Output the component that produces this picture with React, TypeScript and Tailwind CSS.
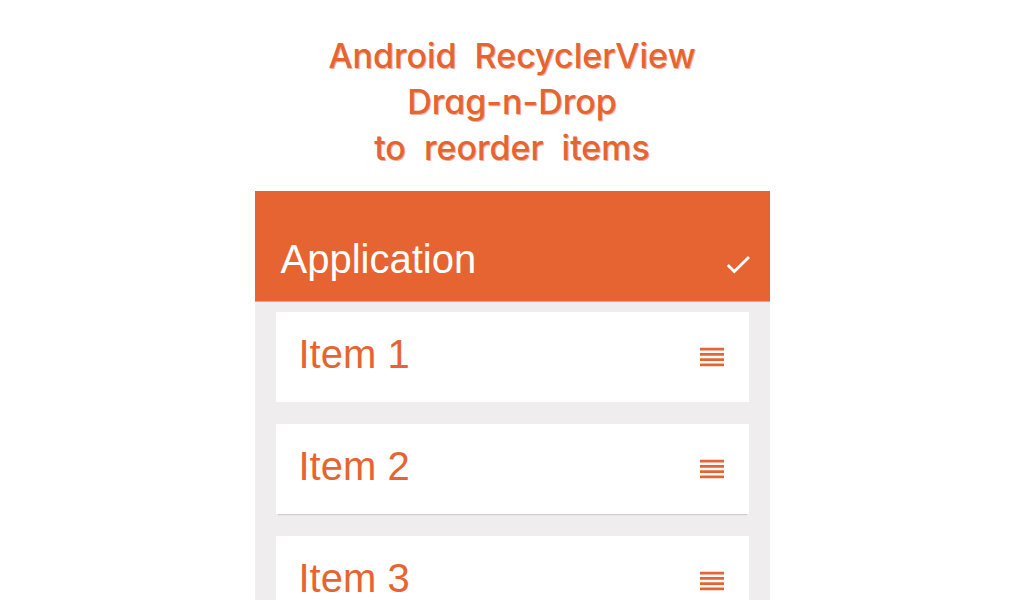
const items = [
  { label: "Item 1", raised: false },
  { label: "Item 2", raised: true },
  { label: "Item 3", raised: false },
];

const title = [["Android", "RecyclerView"], ["Drag-n-Drop"], ["to", "reorder", "items"]];

function CheckIcon() {
  return (
    <svg viewBox="0 0 24 18" className="h-[18px] w-6" fill="none" stroke="currentColor" strokeWidth="2.8" aria-hidden="true">
      <path d="M1.8 9 L8.3 15.5 L23 1" />
    </svg>
  );
}

function DragIcon() {
  return (
    <svg viewBox="0 0 24 20" className="h-5 w-6" fill="currentColor" aria-hidden="true">
      <path d="M0 .7h24v2.7H0zM0 6h24v2.7H0zM0 11.3h24v2.7H0zM0 16.6h24v2.7H0z" />
    </svg>
  );
}

export default function App() {
  return (
    <div className="h-screen overflow-hidden bg-white font-['Liberation_Sans',Arial,sans-serif] text-[#e66431]">
      <h1 className="flex flex-col items-center pt-[33px] pb-5 font-[Inter,sans-serif] text-[34px] leading-[46px] font-medium [font-feature-settings:'cv11'] [text-shadow:1px_1px_0_#f3b198]">
        {title.map((words) => (
          <span key={words[0]} className="flex gap-[18px]">
            {words.map((word) => (
              <span key={word}>{word} </span>
            ))}
          </span>
        ))}
      </h1>
      <main className="mx-auto min-h-screen w-full max-w-[515px] bg-[#efedee] text-[40px] leading-[46px]">
        <header className="flex items-end justify-between border-b border-[#d5a596] bg-[#e66431] pt-[45px] pr-5 pb-[19px] pl-[26px] text-white">
          <h2>Application</h2>
          <button type="button" aria-label="Done" className="pb-2">
            <CheckIcon />
          </button>
        </header>
        <ul className="flex flex-col gap-[22px] px-[21px] pt-[10px]">
          {items.map(({ label, raised }) => (
            <li
              key={label}
              className={
                raised
                  ? "flex h-[90px] items-center justify-between bg-white pr-[25px] pl-[23px] shadow-[0_3px_1px_-2px_#d0cece]"
                  : "flex h-[90px] items-center justify-between bg-white pr-[25px] pl-[23px]"
              }
            >
              <span className="pb-1.5">{label}</span>
              <button type="button" aria-label={`Reorder ${label}`} className="cursor-grab">
                <DragIcon />
              </button>
            </li>
          ))}
        </ul>
      </main>
    </div>
  );
}
